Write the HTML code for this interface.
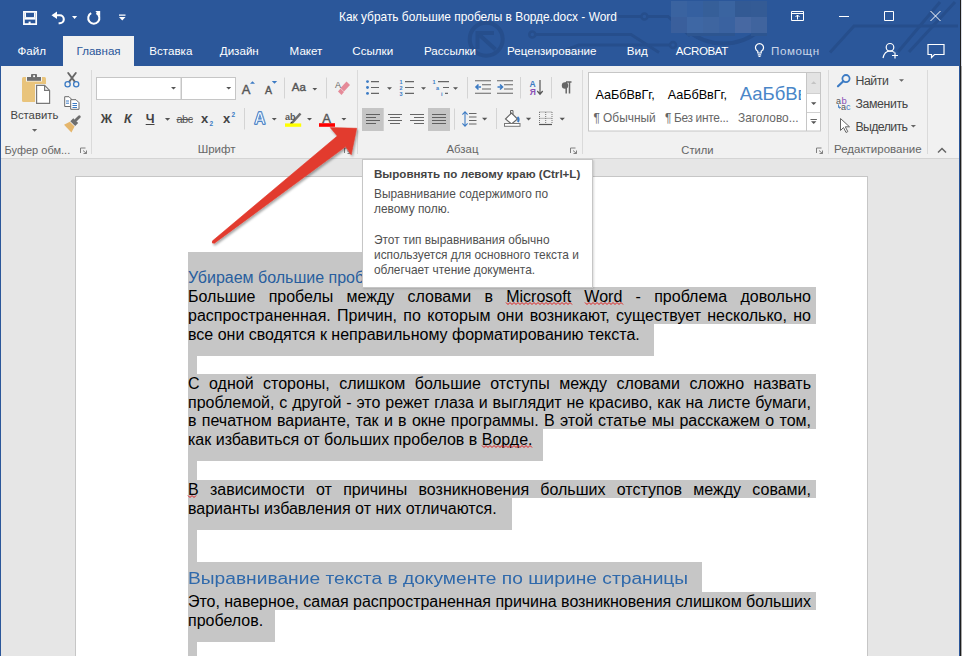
<!DOCTYPE html>
<html><head><meta charset="utf-8"><style>
html,body{margin:0;padding:0;}
body{width:962px;height:656px;overflow:hidden;position:relative;font-family:"Liberation Sans", sans-serif;background:#e6e6e6;}
</style></head><body>
<div style="position:absolute;left:0px;top:0px;width:962px;height:66px;background:#2b579a;"></div>
<svg style="position:absolute;left:0px;top:0px;" width="962" height="66" viewBox="0 0 962 66"><g stroke="#264e8c" fill="none">
<circle cx="486.2" cy="39.2" r="16.5" stroke-width="4"/>
<path d="M477.5 49 V33 H494" stroke-width="4"/>
<path d="M479 34.5 L495.5 49.5" stroke-width="4"/>
<circle cx="532.3" cy="34.6" r="3" stroke-width="2.5"/>
<path d="M535.5 34.6 H631 L659 52.5" stroke-width="3"/>
<path d="M566 50 L578.7 45 H670" stroke-width="3"/>
<circle cx="673" cy="45" r="3" stroke-width="2.5"/>
<path d="M618 16.5 H641" stroke-width="3"/>
<circle cx="644.4" cy="16.5" r="3" stroke-width="2.5"/>
<path d="M647.5 16.5 H668 L690 36" stroke-width="3"/>
<path d="M687 30 A 56 56 0 0 0 760 30" stroke-width="4"/>
<path d="M830 52.5 L854 26 H958" stroke-width="3"/>
<path d="M898 52 L940 2 M909 52 L955 2" stroke-width="3"/>
</g></svg>
<div style="position:absolute;left:671px;top:1px;width:16px;height:16px;background:#3a63a0;"></div>
<div style="position:absolute;left:687px;top:1px;width:16px;height:16px;background:#3560a0;"></div>
<div style="position:absolute;left:703px;top:1px;width:16px;height:16px;background:#365f99;"></div>
<div style="position:absolute;left:719px;top:1px;width:16px;height:16px;background:#3a64a0;"></div>
<div style="position:absolute;left:735px;top:1px;width:16px;height:16px;background:#335a94;"></div>
<div style="position:absolute;left:751px;top:1px;width:16px;height:16px;background:#345b95;"></div>
<div style="position:absolute;left:671px;top:17px;width:16px;height:16px;background:#3a5f9c;"></div>
<div style="position:absolute;left:687px;top:17px;width:16px;height:16px;background:#3e67a4;"></div>
<div style="position:absolute;left:703px;top:17px;width:16px;height:16px;background:#3e65a0;"></div>
<div style="position:absolute;left:719px;top:17px;width:16px;height:16px;background:#3a62a0;"></div>
<div style="position:absolute;left:735px;top:17px;width:16px;height:16px;background:#4768a2;"></div>
<div style="position:absolute;left:751px;top:17px;width:16px;height:16px;background:#40649e;"></div>
<div style="position:absolute;left:687px;top:33px;width:48px;height:3px;background:#2d5590;"></div>
<div style="position:absolute;left:751px;top:33px;width:16px;height:3px;background:#2d5590;"></div>
<div style="position:absolute;left:339px;top:12.13px;font-size:11.9px;line-height:11.9px;color:#fff;font-weight:400;white-space:pre;">Как убрать большие пробелы в Ворде.docx - Word</div>
<div style="position:absolute;left:63px;top:36px;width:71px;height:30px;background:#f1f1f1;"></div>
<div style="position:absolute;left:17.5px;top:45.48px;font-size:11.6px;line-height:11.6px;color:#fff;font-weight:400;white-space:pre;">Файл</div>
<div style="position:absolute;left:76.5px;top:45.48px;font-size:11.6px;line-height:11.6px;color:#2b579a;font-weight:400;white-space:pre;">Главная</div>
<div style="position:absolute;left:149.3px;top:45.48px;font-size:11.6px;line-height:11.6px;color:#fff;font-weight:400;white-space:pre;">Вставка</div>
<div style="position:absolute;left:219.8px;top:45.48px;font-size:11.6px;line-height:11.6px;color:#fff;font-weight:400;white-space:pre;">Дизайн</div>
<div style="position:absolute;left:289.6px;top:45.48px;font-size:11.6px;line-height:11.6px;color:#fff;font-weight:400;white-space:pre;">Макет</div>
<div style="position:absolute;left:352.3px;top:45.48px;font-size:11.6px;line-height:11.6px;color:#fff;font-weight:400;white-space:pre;">Ссылки</div>
<div style="position:absolute;left:424px;top:45.48px;font-size:11.6px;line-height:11.6px;color:#fff;font-weight:400;white-space:pre;">Рассылки</div>
<div style="position:absolute;left:507px;top:45.48px;font-size:11.6px;line-height:11.6px;color:#fff;font-weight:400;white-space:pre;">Рецензирование</div>
<div style="position:absolute;left:626.8px;top:45.48px;font-size:11.6px;line-height:11.6px;color:#fff;font-weight:400;white-space:pre;">Вид</div>
<div style="position:absolute;left:675.8px;top:45.48px;font-size:11.6px;line-height:11.6px;color:#fff;font-weight:400;white-space:pre;letter-spacing:-0.45px;">ACROBAT</div>
<div style="position:absolute;left:771px;top:45.48px;font-size:11.6px;line-height:11.6px;color:#c9d5e8;font-weight:400;white-space:pre;letter-spacing:0.6px;">Помощн</div>
<div style="position:absolute;left:0px;top:66px;width:962px;height:92px;background:#f1f1f1;"></div>
<div style="position:absolute;left:0px;top:158px;width:962px;height:1px;background:#d4d4d4;"></div>
<div style="position:absolute;left:91px;top:70px;width:1px;height:84px;background:#dadada;"></div>
<div style="position:absolute;left:357px;top:70px;width:1px;height:84px;background:#dadada;"></div>
<div style="position:absolute;left:582px;top:70px;width:1px;height:84px;background:#dadada;"></div>
<div style="position:absolute;left:828px;top:70px;width:1px;height:84px;background:#dadada;"></div>
<div style="position:absolute;left:927px;top:70px;width:1px;height:84px;background:#dadada;"></div>
<div style="position:absolute;left:4.6px;top:144.69px;font-size:11px;line-height:11px;color:#666;font-weight:400;white-space:pre;">Буфер обм...</div>
<div style="position:absolute;left:197.7px;top:144.27px;font-size:11.5px;line-height:11.5px;color:#666;font-weight:400;white-space:pre;">Шрифт</div>
<div style="position:absolute;left:446.5px;top:144.35px;font-size:11.4px;line-height:11.4px;color:#666;font-weight:400;white-space:pre;">Абзац</div>
<div style="position:absolute;left:681.3px;top:144.52px;font-size:11.2px;line-height:11.2px;color:#666;font-weight:400;white-space:pre;">Стили</div>
<div style="position:absolute;left:834px;top:144.27px;font-size:11.5px;line-height:11.5px;color:#666;font-weight:400;white-space:pre;">Редактирование</div>
<svg style="position:absolute;left:0;top:0" width="962" height="160" viewBox="0 0 962 160">
<!-- QAT -->
<path d="M23.9 11.8 h12.3 v12.3 h-12.3 z" fill="none" stroke="#fff" stroke-width="1.7"/>
<rect x="24.5" y="17.2" width="11" height="2.4" fill="#fff"/>
<path d="M24.8 12.5 h1.2 v4 q0 0.8 0.8 0.8 h6.4 q0.8 0 0.8 -0.8 v-4 h1.2 v5 h-10.4 z" fill="#fff"/>
<rect x="28.6" y="21.6" width="2" height="3" fill="#fff"/>
<path d="M53 15.2 h6.8 a4 4 0 0 1 0 8 h-1.2" fill="none" stroke="#fff" stroke-width="2.1"/>
<path d="M51.5 15.2 l5.5 -3.8 v7.6 z" fill="#fff"/>
<path d="M72 16 h5.2 l-2.6 3 z" fill="#fff"/>
<path d="M91.2 13.2 a5.6 5.6 0 1 0 5.2 0" fill="none" stroke="#fff" stroke-width="2"/>
<path d="M95.4 11 h4.8 v5.6 z" fill="#fff"/>
<path d="M119 14.6 h6.5 v1.2 h-6.5 z M119 17 h6.5 l-3.25 3.5 z" fill="#fff"/>
<!-- window controls -->
<g fill="none" stroke="#fff" stroke-width="1">
<path d="M791.5 11.5 h12 v9 h-12 z M791.5 13.5 h12"/>
<path d="M797.5 19.5 v-4.5 M795.5 17 l2 -2 l2 2"/>
<path d="M839 16.5 h10"/>
<path d="M884.5 11.5 h9 v9 h-9 z"/>
<path d="M930.5 11 l10 10 M940.5 11 l-10 10"/>
</g>
<!-- person add, comment -->
<g fill="none" stroke="#fff" stroke-width="1.2">
<circle cx="890" cy="47.3" r="3.8"/>
<path d="M883 58 q1.5 -7 7 -7 q3 0 4.5 1.5"/>
<path d="M895 52.5 v6 M892 55.5 h6"/>
<path d="M928 44.5 h16 v10 h-9.5 l-3 3 v-3 h-3.5 z"/>
<path d="M757.8 53 v-1.8 a4 4 0 1 1 3.4 0 v1.8 z M757.8 54.8 h3.4 M758.5 56.5 h2"/>
</g>

<!-- clipboard -->
<rect x="22" y="77" width="24" height="25" rx="1.5" fill="#e9c47c"/>
<rect x="26" y="76" width="16" height="5.5" fill="#f4f4f4"/>
<rect x="27" y="77" width="14" height="3.8" fill="#6e6e6e"/>
<rect x="31" y="74" width="6" height="4" rx="0.8" fill="#6e6e6e"/>
<rect x="33.2" y="75.3" width="1.8" height="1.8" fill="#fff"/>
<path d="M35 84 h10.5 l6 6 v15 h-16.5 z" fill="#f4f4f4"/>
<path d="M36.6 85.4 h8 l5 5 v13 h-13 z" fill="#fff" stroke="#787878" stroke-width="1.2"/>
<path d="M44.6 85.4 v5 h5" fill="none" stroke="#787878" stroke-width="1.2"/>
<path d="M32 129 h5.2 l-2.6 2.8 z" fill="#666"/>
<!-- scissors -->
<path d="M68.2 73 L75.3 82.3 M75.8 73 L68.7 82.3" stroke="#666" stroke-width="1.9" stroke-linecap="round"/>
<circle cx="67.6" cy="84.3" r="2.6" fill="#f1f1f1" stroke="#3c7bc4" stroke-width="1.3"/>
<circle cx="76.2" cy="84.3" r="2.6" fill="#f1f1f1" stroke="#3c7bc4" stroke-width="1.3"/>
<!-- copy -->
<path d="M64.7 96.7 h4.3 l2.5 2.5 v7.3 h-6.8 z" fill="#fff" stroke="#6a6a6a" stroke-width="1"/>
<path d="M70.7 99.7 h5.3 l3 3 v6.6 h-8.3 z" fill="#fff" stroke="#6a6a6a" stroke-width="1"/>
<path d="M66 101 h3 M66 103.2 h3 M72.5 103.5 h4.5 M72.5 105.5 h4.5 M72.5 107.5 h4.5" stroke="#3c7bc4" stroke-width="1"/>
<!-- painter -->
<path d="M64 124.8 L69.8 121.8 L74.6 126.6 L71.4 132.5 Z" fill="#e5b66c"/>
<path d="M70.3 121.2 L75.2 126.1 L78.2 123.1 L73.3 118.2 Z" fill="#6e6e6e"/>
<path d="M76 120 L79.3 116.7" stroke="#6e6e6e" stroke-width="2.8" stroke-linecap="round"/>

<!-- font boxes -->
<rect x="96.5" y="77.5" width="84.5" height="22" fill="#fff" stroke="#c6c6c6"/>
<rect x="181.5" y="77.5" width="54" height="22" fill="#fff" stroke="#c6c6c6"/>
<path d="M171 87 h5 l-2.5 2.5 z M226.2 87 h5 l-2.5 2.5 z" fill="#555"/>
<!-- grow/shrink -->
<path d="M250 83.8 h5 l-2.5 -2.6 z" fill="#3c7bc4"/>
<path d="M271.8 80.9 h5.4 l-2.7 2.8 z" fill="#3c7bc4"/>
<path d="M164.9 118 h5.3 l-2.65 2.7 z" fill="#555"/>
<path d="M312.4 88 h4.8 l-2.4 2.6 z M271.8 118 h5 l-2.5 2.6 z M307 118 h5 l-2.5 2.6 z M341.4 118 h5 l-2.5 2.6 z" fill="#555"/>
<line x1="284.5" y1="77.5" x2="284.5" y2="98.5" stroke="#d4d4d4"/>
<line x1="326.5" y1="77.5" x2="326.5" y2="98.5" stroke="#d4d4d4"/>
<line x1="244.5" y1="108" x2="244.5" y2="129.5" stroke="#d4d4d4"/>
<!-- clear formatting -->
<path d="M340.5 88 l6 -6.5 l3.5 3.5 l-6 6.5 z" fill="#e58a98"/>
<path d="M338 91.5 l2.5 -3 l3.5 3.5 l-2.5 3 z" fill="#e58a98"/>
<!-- highlighter -->
<path d="M291 124 L300.5 113.5" stroke="#6e6e6e" stroke-width="2.6"/>
<path d="M289.8 124.2 l1.5 -2.5 l1.5 1.5 z" fill="#333"/>
<rect x="285" y="123.4" width="16.2" height="3.4" fill="#ffff00"/>
<rect x="319" y="123.2" width="16" height="3.6" fill="#ff0000"/>
<!-- text effect A -->
<text x="254.3" y="124.2" font-family="Liberation Sans" font-size="15.6" font-weight="700" fill="#f4f8fd" stroke="#3a78c3" stroke-width="1.3" paint-order="stroke" stroke-linejoin="round">A</text><text x="254.3" y="124.2" font-family="Liberation Sans" font-size="15.6" font-weight="700" fill="none" stroke="#3a78c3" stroke-width="0.9" stroke-linejoin="round" opacity="0.6">A</text>

<!-- paragraph: bullets -->
<g fill="#3c7bc4"><circle cx="367.5" cy="81.6" r="1.45"/><circle cx="367.5" cy="87.5" r="1.45"/><circle cx="367.5" cy="93.4" r="1.45"/></g>
<path d="M371 81.6 h8 M371 87.5 h8 M371 93.4 h8" stroke="#666" stroke-width="1.1"/>
<path d="M387 87.2 h5 l-2.5 2.5 z M421 87.2 h5 l-2.5 2.5 z M453 87.2 h5 l-2.5 2.5 z" fill="#555"/>
<path d="M405 81.6 h9 M405 87.5 h9 M405 93.4 h9" stroke="#666" stroke-width="1.1"/>
<g fill="#3c7bc4" font-family="Liberation Sans" font-size="5.5" font-weight="700"><text x="399.5" y="83.8">1</text><text x="399.5" y="89.7">2</text><text x="399.5" y="95.6">3</text>
<text x="432.5" y="83.8">1</text><text x="436" y="89.7">a</text><text x="441" y="95.6">i</text></g>
<path d="M438 81.6 h11 M443 87.5 h6 M445 93.4 h3" stroke="#666" stroke-width="1.1"/>
<line x1="467.5" y1="77" x2="467.5" y2="98.5" stroke="#d4d4d4"/>
<!-- indent -->
<path d="M475 80.8 h16 M482 84.8 h9 M482 89 h9 M475 93.2 h16 M497 80.8 h16 M504 84.8 h9 M504 89 h9 M497 93.2 h16" stroke="#666" stroke-width="1.1"/>
<path d="M481 87 h-5 M478.5 84.5 l-2.5 2.5 l2.5 2.5" fill="none" stroke="#3c7bc4" stroke-width="1.6"/>
<path d="M497.5 87 h5 M500 84.5 l2.5 2.5 l-2.5 2.5" fill="none" stroke="#3c7bc4" stroke-width="1.6"/>
<line x1="520.5" y1="77" x2="520.5" y2="98.5" stroke="#d4d4d4"/>
<!-- sort -->
<text x="529.5" y="87" font-family="Liberation Sans" font-size="8.5" font-weight="700" fill="#3c7bc4">A</text>
<text x="529.8" y="95.2" font-family="Liberation Sans" font-size="8.5" font-weight="700" fill="#8a4fb5">Я</text>
<path d="M540 80 v14 M537.3 91 l2.7 3.2 l2.7 -3.2" fill="none" stroke="#555" stroke-width="1.2"/>
<line x1="551.5" y1="77" x2="551.5" y2="98.5" stroke="#d4d4d4"/>
<!-- pilcrow -->
<path d="M566 82 h5.5 M566.2 82 v11.5 M569.5 82 v11.5" stroke="#666" stroke-width="1.5"/>
<circle cx="565" cy="85.5" r="3.2" fill="#666"/>
<!-- align -->
<rect x="362" y="108" width="21.7" height="23" fill="#c5c5c5"/>
<rect x="428" y="108" width="22" height="23" fill="#c5c5c5"/>
<path d="M366 114.5 h14 M366 117.5 h10 M366 120.5 h14 M366 123.5 h10" stroke="#5f5f5f" stroke-width="1.2"/>
<path d="M388 114.5 h14 M390 117.5 h10 M388 120.5 h14 M390 123.5 h10" stroke="#666" stroke-width="1.2"/>
<path d="M410 114.5 h14 M414 117.5 h10 M410 120.5 h14 M414 123.5 h10" stroke="#666" stroke-width="1.2"/>
<path d="M432 114.5 h14 M432 117.5 h14 M432 120.5 h14 M432 123.5 h14" stroke="#5f5f5f" stroke-width="1.2"/>
<line x1="454.5" y1="108.5" x2="454.5" y2="129.7" stroke="#d4d4d4"/>
<!-- line spacing -->
<path d="M465 112 v14 M462.4 114.6 l2.6 -2.8 l2.6 2.8 M462.4 123.4 l2.6 2.8 l2.6 -2.8" fill="none" stroke="#3c7bc4" stroke-width="1.05"/>
<path d="M469 113.5 h7.5 M469 117 h7.5 M469 120.5 h7.5 M469 124 h7.5" stroke="#666" stroke-width="1.1"/>
<path d="M482 117.7 h5.3 l-2.65 2.7 z M525.9 117.7 h5.3 l-2.65 2.7 z M559.6 117.7 h5.3 l-2.65 2.7 z" fill="#555"/>
<line x1="496.5" y1="108" x2="496.5" y2="129" stroke="#d4d4d4"/>
<!-- shading -->
<path d="M505.5 119 l6 -6 l6 6 l-6 5 z" fill="#fff" stroke="#666" stroke-width="1.1"/>
<path d="M510.5 114 v-3.5 h2.5 v4" fill="none" stroke="#666" stroke-width="1"/>
<path d="M517.5 117 q2 1.5 0.5 5" fill="none" stroke="#3c7bc4" stroke-width="2"/>
<rect x="504.5" y="123.5" width="15.5" height="2.8" fill="#fff" stroke="#777" stroke-width="1"/>
<!-- borders -->
<path d="M539.5 112 h12.5 M539.5 118.3 h12.5 M539.5 112 v12 M545.7 112 v12 M552 112 v12" stroke="#777" stroke-width="1" stroke-dasharray="1 1"/>
<path d="M539 124.5 h13" stroke="#555" stroke-width="1.2"/>

<!-- styles gallery -->
<rect x="588.5" y="72.5" width="232" height="58.5" fill="#fff" stroke="#c6c6c6"/>
<rect x="807" y="73" width="13" height="20.3" fill="#e3e3e3"/>
<line x1="806.5" y1="73" x2="806.5" y2="131" stroke="#c6c6c6"/>
<line x1="807" y1="93.5" x2="820" y2="93.5" stroke="#d0d0d0"/>
<line x1="807" y1="112.5" x2="820" y2="112.5" stroke="#d0d0d0"/>
<path d="M811 84 h5.4 l-2.7 -2.8 z" fill="#c4c4c4"/>
<path d="M811 102.2 h5.4 l-2.7 2.8 z" fill="#555"/>
<path d="M810.5 119.5 h6.4" stroke="#555" stroke-width="0.9"/><path d="M811 121.3 h5.4 l-2.7 2.8 z" fill="#555"/>

<!-- editing -->
<circle cx="846" cy="78.6" r="3.6" fill="none" stroke="#3c7bc4" stroke-width="1.8"/>
<path d="M843.3 81.3 L838 86.3" stroke="#3c7bc4" stroke-width="2.2" stroke-linecap="round"/>
<path d="M899 79.3 h5 l-2.5 2.4 z M910.8 125 h5.2 l-2.6 2.4 z" fill="#666"/>
<text x="836" y="103.5" font-family="Liberation Sans" font-size="9" fill="#555">a</text>
<text x="841.5" y="103.5" font-family="Liberation Sans" font-size="9.5" fill="#8a4fb5">b</text>
<text x="841" y="110" font-family="Liberation Sans" font-size="9" fill="#555">a</text>
<text x="846" y="110" font-family="Liberation Sans" font-size="9" fill="#3c7bc4">c</text>
<path d="M838.5 104.5 v3 h2 M839.5 106.5 l1 1 l-1 1" fill="none" stroke="#3c7bc4" stroke-width="0.9"/>
<path d="M840.5 118.5 v12 l3 -3 l2.5 5 l1.8 -0.9 l-2.5 -4.8 h4.2 z" fill="#fff" stroke="#666" stroke-width="1" stroke-linejoin="round"/>
<!-- collapse -->
<path d="M938 152.5 l4 -4 l4 4" fill="none" stroke="#666" stroke-width="1.5"/>
<!-- launchers -->
<g fill="none" stroke="#808080" stroke-width="1">
<path d="M80.5 153 v-5 h5"/><path d="M83 150.5 l3.5 3 M86.5 150.5 v3 h-3"/>
<path d="M570.5 153 v-5 h5"/><path d="M573 150.5 l3.5 3 M576.5 150.5 v3 h-3"/>
<path d="M816.5 153 v-5 h5"/><path d="M819 150.5 l3.5 3 M822.5 150.5 v3 h-3"/>
<path d="M344.5 153 v-5 h5"/><path d="M347 150.5 l3.5 3 M350.5 150.5 v3 h-3"/>
</g>
</svg>

<div style="position:absolute;left:10.4px;top:109.83px;font-size:11.3px;line-height:11.3px;color:#444;font-weight:400;white-space:pre;">Вставить</div>
<div style="position:absolute;left:100.8px;top:112.82px;font-size:12.5px;line-height:12.5px;color:#444;font-weight:700;white-space:pre;">Ж</div>
<div style="position:absolute;left:124px;top:112.82px;font-size:12.5px;line-height:12.5px;color:#444;font-weight:700;white-space:pre;font-style:italic;">К</div>
<div style="position:absolute;left:145.7px;top:112.82px;font-size:12.5px;line-height:12.5px;color:#444;font-weight:700;white-space:pre;text-decoration:underline;">Ч</div>
<div style="position:absolute;left:176.5px;top:114.09px;font-size:11px;line-height:11px;color:#555;font-weight:400;white-space:pre;text-decoration:line-through;letter-spacing:-0.5px;">abc</div>
<div style="position:absolute;left:201px;top:112.40px;font-size:13px;line-height:13px;color:#444;font-weight:700;white-space:pre;">x</div>
<div style="position:absolute;left:209.5px;top:120.50px;font-size:6.5px;line-height:6.5px;color:#3c7bc4;font-weight:700;white-space:pre;">2</div>
<div style="position:absolute;left:223px;top:112.40px;font-size:13px;line-height:13px;color:#444;font-weight:700;white-space:pre;">x</div>
<div style="position:absolute;left:231.5px;top:111.50px;font-size:6.5px;line-height:6.5px;color:#3c7bc4;font-weight:700;white-space:pre;">2</div>
<div style="position:absolute;left:241.8px;top:82.70px;font-size:13px;line-height:13px;color:#555;font-weight:400;white-space:pre;-webkit-text-stroke:0.4px #555;">A</div>
<div style="position:absolute;left:265px;top:84.81px;font-size:10.5px;line-height:10.5px;color:#555;font-weight:400;white-space:pre;-webkit-text-stroke:0.4px #555;">A</div>
<div style="position:absolute;left:291.8px;top:81.97px;font-size:11.5px;line-height:11.5px;color:#555;font-weight:400;white-space:pre;-webkit-text-stroke:0.4px #555;">Aa</div>
<div style="position:absolute;left:335px;top:81.38px;font-size:9px;line-height:9px;color:#666;font-weight:400;white-space:pre;">A</div>
<div style="position:absolute;left:285px;top:113.38px;font-size:9px;line-height:9px;color:#555;font-weight:700;white-space:pre;">ab</div>
<div style="position:absolute;left:322.3px;top:111.80px;font-size:13px;line-height:13px;color:#555;font-weight:400;white-space:pre;-webkit-text-stroke:0.4px #555;">A</div>
<div style="position:absolute;left:595.6px;top:88.55px;font-size:12.7px;line-height:12.7px;color:#000;font-weight:400;white-space:pre;letter-spacing:-0.1px;">АаБбВвГг,</div>
<div style="position:absolute;left:667.8px;top:88.55px;font-size:12.7px;line-height:12.7px;color:#000;font-weight:400;white-space:pre;letter-spacing:-0.1px;">АаБбВвГг,</div>
<div style="position:absolute;left:739.7px;top:85.14px;font-size:18.5px;line-height:18.5px;color:#4a86c8;font-weight:400;white-space:pre;width:61px;overflow:hidden;">АаБбВв</div>
<div style="position:absolute;left:593.4px;top:112.83px;font-size:11.9px;line-height:11.9px;color:#666;font-weight:400;white-space:pre;">¶ Обычный</div>
<div style="position:absolute;left:665px;top:112.83px;font-size:11.9px;line-height:11.9px;color:#666;font-weight:400;white-space:pre;letter-spacing:-0.33px;">¶ Без инте...</div>
<div style="position:absolute;left:738px;top:112.83px;font-size:11.9px;line-height:11.9px;color:#666;font-weight:400;white-space:pre;">Заголово...</div>
<div style="position:absolute;left:855.4px;top:74.99px;font-size:12.3px;line-height:12.3px;color:#444;font-weight:400;white-space:pre;letter-spacing:-0.38px;">Найти</div>
<div style="position:absolute;left:855.4px;top:97.99px;font-size:12.3px;line-height:12.3px;color:#444;font-weight:400;white-space:pre;letter-spacing:-0.36px;">Заменить</div>
<div style="position:absolute;left:855.4px;top:120.99px;font-size:12.3px;line-height:12.3px;color:#444;font-weight:400;white-space:pre;letter-spacing:-0.6px;">Выделить</div>
<div style="position:absolute;left:0px;top:159px;width:962px;height:497px;background:#e6e6e6;"></div>
<div style="position:absolute;left:75px;top:176px;width:791px;height:500px;background:#fff;border:1px solid #c6c6c6"></div>
<div style="position:absolute;left:188px;top:252px;width:175px;height:35px;background:#c6c6c6;"></div>
<div style="position:absolute;left:188px;top:287px;width:628px;height:37px;background:#c6c6c6;"></div>
<div style="position:absolute;left:188px;top:324px;width:466px;height:32px;background:#c6c6c6;"></div>
<div style="position:absolute;left:188px;top:356px;width:9px;height:18px;background:#c6c6c6;"></div>
<div style="position:absolute;left:188px;top:374px;width:628px;height:55px;background:#c6c6c6;"></div>
<div style="position:absolute;left:188px;top:429px;width:355px;height:32px;background:#c6c6c6;"></div>
<div style="position:absolute;left:188px;top:461px;width:9px;height:19px;background:#c6c6c6;"></div>
<div style="position:absolute;left:188px;top:480px;width:628px;height:18px;background:#c6c6c6;"></div>
<div style="position:absolute;left:188px;top:498px;width:324px;height:32px;background:#c6c6c6;"></div>
<div style="position:absolute;left:188px;top:530px;width:9px;height:32px;background:#c6c6c6;"></div>
<div style="position:absolute;left:188px;top:562px;width:514px;height:30px;background:#c6c6c6;"></div>
<div style="position:absolute;left:188px;top:592px;width:628px;height:18px;background:#c6c6c6;"></div>
<div style="position:absolute;left:188px;top:610px;width:87px;height:32px;background:#c6c6c6;"></div>
<div style="position:absolute;left:188px;top:642px;width:9px;height:14px;background:#c6c6c6;"></div>
<div style="position:absolute;left:188px;top:269.66px;font-size:16px;line-height:16px;color:#285e9e;font-weight:400;white-space:pre;">Убираем большие пробелы в Ворде</div>
<div style="position:absolute;left:188px;top:288.96px;font-size:16px;line-height:16px;color:#000;font-weight:400;white-space:pre;width:623px;text-align:justify;text-align-last:justify;white-space:normal;">Большие пробелы между словами в Microsoft Word - проблема довольно</div>
<div style="position:absolute;left:188px;top:307.96px;font-size:16px;line-height:16px;color:#000;font-weight:400;white-space:pre;width:623px;text-align:justify;text-align-last:justify;white-space:normal;">распространенная. Причин, по которым они возникают, существует несколько, но</div>
<div style="position:absolute;left:188px;top:326.96px;font-size:16px;line-height:16px;color:#000;font-weight:400;white-space:pre;">все они сводятся к неправильному форматированию текста.</div>
<div style="position:absolute;left:188px;top:375.96px;font-size:16px;line-height:16px;color:#000;font-weight:400;white-space:pre;width:623px;text-align:justify;text-align-last:justify;white-space:normal;">С одной стороны, слишком большие отступы между словами сложно назвать</div>
<div style="position:absolute;left:188px;top:394.96px;font-size:16px;line-height:16px;color:#000;font-weight:400;white-space:pre;width:623px;text-align:justify;text-align-last:justify;white-space:normal;">проблемой, с другой - это режет глаза и выглядит не красиво, как на листе бумаги,</div>
<div style="position:absolute;left:188px;top:412.96px;font-size:16px;line-height:16px;color:#000;font-weight:400;white-space:pre;width:623px;text-align:justify;text-align-last:justify;white-space:normal;">в печатном варианте, так и в окне программы. В этой статье мы расскажем о том,</div>
<div style="position:absolute;left:188px;top:431.96px;font-size:16px;line-height:16px;color:#000;font-weight:400;white-space:pre;">как избавиться от больших пробелов в Ворде.</div>
<div style="position:absolute;left:188px;top:481.96px;font-size:16px;line-height:16px;color:#000;font-weight:400;white-space:pre;width:623px;text-align:justify;text-align-last:justify;white-space:normal;">В зависимости от причины возникновения больших отступов между совами,</div>
<div style="position:absolute;left:188px;top:500.96px;font-size:16px;line-height:16px;color:#000;font-weight:400;white-space:pre;">варианты избавления от них отличаются.</div>
<div style="position:absolute;left:188px;top:568.05px;font-size:19.2px;line-height:19.2px;color:#2f69ab;font-weight:400;white-space:pre;transform:scaleY(0.9);transform-origin:0 16.25px;">Выравнивание текста в документе по ширине страницы</div>
<div style="position:absolute;left:188px;top:593.96px;font-size:16px;line-height:16px;color:#000;font-weight:400;white-space:pre;letter-spacing:-0.03px;">Это, наверное, самая распространенная причина возникновения слишком больших</div>
<div style="position:absolute;left:188px;top:612.96px;font-size:16px;line-height:16px;color:#000;font-weight:400;white-space:pre;">пробелов.</div>
<svg style="position:absolute;left:0px;top:0px;" width="962" height="656" viewBox="0 0 962 656"><path d="M506.0 302.5 L508.0 304.5 L510.0 302.5 L512.0 304.5 L514.0 302.5 L516.0 304.5 L518.0 302.5 L520.0 304.5 L522.0 302.5 L524.0 304.5 L526.0 302.5 L528.0 304.5 L530.0 302.5 L532.0 304.5 L534.0 302.5 L536.0 304.5 L538.0 302.5 L540.0 304.5 L542.0 302.5 L544.0 304.5 L546.0 302.5 L548.0 304.5 L550.0 302.5 L552.0 304.5 L554.0 302.5 L556.0 304.5 L558.0 302.5 L560.0 304.5 L562.0 302.5 L564.0 304.5 L566.0 302.5 L568.0 304.5 L570.0 302.5 L572.0 304.5 M585.0 302.5 L587.0 304.5 L589.0 302.5 L591.0 304.5 L593.0 302.5 L595.0 304.5 L597.0 302.5 L599.0 304.5 L601.0 302.5 L603.0 304.5 L605.0 302.5 L607.0 304.5 L609.0 302.5 L611.0 304.5 L613.0 302.5 L615.0 304.5 L617.0 302.5 L619.0 304.5 L621.0 302.5 L623.0 304.5 M482.0 445.5 L484.0 447.5 L486.0 445.5 L488.0 447.5 L490.0 445.5 L492.0 447.5 L494.0 445.5 L496.0 447.5 L498.0 445.5 L500.0 447.5 L502.0 445.5 L504.0 447.5 L506.0 445.5 L508.0 447.5 L510.0 445.5 L512.0 447.5 L514.0 445.5 L516.0 447.5 L518.0 445.5 L520.0 447.5 L522.0 445.5 L524.0 447.5 L526.0 445.5 L528.0 447.5 L530.0 445.5 L532.0 447.5 M188.0 495.5 L190.0 497.5 L192.0 495.5 L194.0 497.5 L196.0 495.5" fill="none" stroke="#e01b1b" stroke-width="1"/></svg>
<div style="position:absolute;left:362px;top:159px;width:229px;height:127px;background:#fff;border:1px solid #c6c6c6;box-shadow:1px 1px 2px rgba(0,0,0,0.15)"></div>
<div style="position:absolute;left:374px;top:167.68px;font-size:11.6px;line-height:11.6px;color:#444;font-weight:700;white-space:pre;">Выровнять по левому краю (Ctrl+L)</div>
<div style="position:absolute;left:374px;top:188.93px;font-size:11.9px;line-height:11.9px;color:#505050;font-weight:400;white-space:pre;">Выравнивание содержимого по</div>
<div style="position:absolute;left:374px;top:203.93px;font-size:11.9px;line-height:11.9px;color:#505050;font-weight:400;white-space:pre;">левому полю.</div>
<div style="position:absolute;left:374px;top:234.93px;font-size:11.9px;line-height:11.9px;color:#505050;font-weight:400;white-space:pre;">Этот тип выравнивания обычно</div>
<div style="position:absolute;left:374px;top:249.93px;font-size:11.9px;line-height:11.9px;color:#505050;font-weight:400;white-space:pre;">используется для основного текста и</div>
<div style="position:absolute;left:374px;top:264.93px;font-size:11.9px;line-height:11.9px;color:#505050;font-weight:400;white-space:pre;">облегчает чтение документа.</div>
<svg style="position:absolute;left:0px;top:0px;pointer-events:none;" width="962" height="656" viewBox="0 0 962 656"><defs><filter id="sh" x="-10%" y="-10%" width="130%" height="130%"><feDropShadow dx="1.2" dy="1.8" stdDeviation="0.9" flood-color="#000" flood-opacity="0.35"/></filter></defs>
<g filter="url(#sh)" fill="#e23a2e">
<path d="M212.6 240.8 L337.3 136.0 L330.2 127.6 L356.7 128.3 L351.2 154.8 L345.7 146.6 L214.4 243.2 Z" stroke="#e23a2e" stroke-width="0.6" stroke-linejoin="round"/>
<circle cx="213.5" cy="242" r="1.6"/>
</g></svg>
<div style="position:absolute;left:0px;top:66px;width:1px;height:590px;background:#2b579a;"></div>
<div style="position:absolute;left:959px;top:0px;width:1px;height:656px;background:#2b579a;"></div>
<div style="position:absolute;left:960px;top:0px;width:1px;height:656px;background:#1e1e1e;"></div>
<div style="position:absolute;left:961px;top:0px;width:1px;height:66px;background:#d8dde6;"></div>
<div style="position:absolute;left:961px;top:66px;width:1px;height:590px;background:#a8a8a8;"></div>
</body></html>
